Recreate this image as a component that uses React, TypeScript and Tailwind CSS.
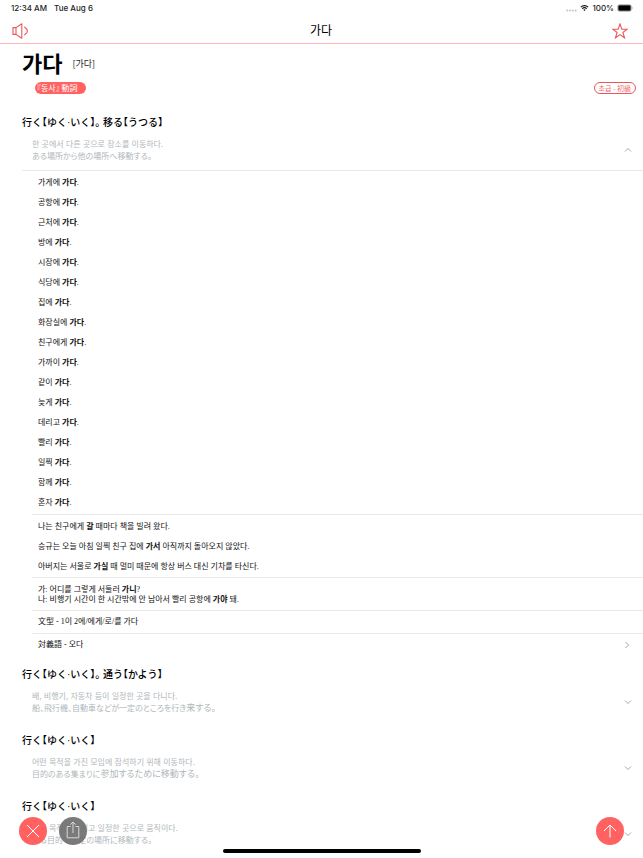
import { useRef, useState } from 'react';
import type { ReactNode } from 'react';

interface Sense {
    title: string;
    korean: string;
    japanese: string;
    japaneseTail?: string;
}

const phrases = [
    '가게에', '공항에', '근처에', '방에', '시장에', '식당에', '집에', '화장실에', '친구에게',
    '가까이', '같이', '늦게', '데리고', '빨리', '일찍', '함께', '혼자',
];

const senses: Sense[] = [
    {
        title: '行く【ゆく·いく】。 移る【うつる】',
        korean: '한 곳에서 다른 곳으로 장소를 이동하다.',
        japanese: 'ある場所から他の場所へ移動する。',
    },
    {
        title: '行く【ゆく·いく】。 通う【かよう】',
        korean: '배, 비행기, 자동차 등이 일정한 곳을 다니다.',
        japanese: '船、飛行機、自動車などが一定のところを行き',
        japaneseTail: '来する。',
    },
    {
        title: '行く【ゆく·いく】',
        korean: '어떤 목적을 가진 모임에 참석하기 위해 이동하다.',
        japanese: '目的のある集まりに',
        japaneseTail: '参加するために移動する。',
    },
    {
        title: '行く【ゆく·いく】',
        korean: '어떤 목적을 가지고 일정한 곳으로 움직이다.',
        japanese: 'ある目的で一定の場所に移動する。',
    },
];

function StatusBar() {
    return (
        <div className="flex h-4 shrink-0 items-center justify-between pl-[11px] pr-[9px] font-['Inter',sans-serif] text-[8px] font-medium leading-4 text-[#222]">
            <div className="flex gap-[7px]">
                <span>12:34 AM</span>
                <span>Tue Aug 6</span>
            </div>
            <div className="flex items-center gap-[3px]">
                <svg viewBox="0 0 11 3" className="mt-1 h-[3px] w-[11px]" fill="#c4c4c4">
                    <circle cx="1.3" cy="1.5" r="1" />
                    <circle cx="4.1" cy="1.5" r="1" />
                    <circle cx="6.9" cy="1.5" r="1" />
                    <circle cx="9.7" cy="1.5" r="1" />
                </svg>
                <svg viewBox="0 0 18 13" className="h-[6px] w-[9px]" fill="none" stroke="#111" strokeWidth="2.4">
                    <path d="M1 4.6a11.6 11.6 0 0 1 16 0" />
                    <path d="M4 8a7.4 7.4 0 0 1 10 0" />
                    <path d="M6.4 10.2a4 4 0 0 1 5.2 0L9 13z" fill="#111" stroke="none" />
                </svg>
                <span>100%</span>
                <svg viewBox="0 0 17 8" className="h-2 w-[17px]">
                    <rect x="0.5" y="0.5" width="14" height="7" rx="2" fill="#fff" stroke="#999" strokeWidth="0.6" />
                    <rect x="1.3" y="1.3" width="12.4" height="5.4" rx="1.2" fill="#000" />
                    <path d="M15.4 2.8v2.4c.9-.3.9-2.1 0-2.4z" fill="#aaa" />
                </svg>
            </div>
        </div>
    );
}

function Chevron({ d, className }: { d: string; className: string }) {
    return (
        <svg viewBox="0 0 8 8" className={className} fill="none" stroke="#a6a6a6" strokeWidth="1" aria-hidden="true">
            <path d={d} />
        </svg>
    );
}

function SenseBlock({ sense, open, onToggle, children }: { sense: Sense; open: boolean; onToggle: () => void; children?: ReactNode }) {
    return (
        <section className="mb-[10px] pl-[22px]">
            <h2 lang="ja" className="pt-px font-['Liberation_Sans','Noto_Sans_CJK_JP',sans-serif] text-[10px] font-medium leading-4 [font-feature-settings:'halt']">
                {sense.title}
            </h2>
            <button
                type="button"
                aria-expanded={open}
                onClick={onToggle}
                className="flex w-full items-center justify-between pb-2 pl-[10px] pr-[11px] pt-[7px] text-left leading-3 text-[#b0b7bb]"
            >
                <span className="block">
                    <span lang="ko" className="block font-['Noto_Sans_CJK_KR',sans-serif] text-[8px]">{sense.korean}</span>
                    <span lang="ja" className="block font-['Noto_Sans_CJK_JP',sans-serif] text-[8px] [font-feature-settings:'palt']">
                        {sense.japanese}
                        {sense.japaneseTail && <span className="text-[9px]">{sense.japaneseTail}</span>}
                    </span>
                </span>
                <Chevron d={open ? 'M1 5.5 4 2.5l3 3' : 'M1 2.5l3 3 3-3'} className="h-2 w-2 shrink-0" />
            </button>
            {open && children}
        </section>
    );
}

function Details() {
    return (
        <div className="border-t border-[#e8e8e8] pl-[10px] font-['Liberation_Serif','Noto_Sans_CJK_KR',serif] text-[8px] leading-5 text-[#111]">
            <ul className="pb-px pl-[6px] pt-[2px]">
                {phrases.map((phrase) => (
                    <li key={phrase}>{phrase} <b>가다</b>.</li>
                ))}
            </ul>
            <ul className="border-t border-[#e8e8e8] pl-[6px] pt-[2px]">
                <li>나는 친구에게 <b>갈</b> 때마다 책을 빌려 왔다.</li>
                <li>승규는 오늘 아침 일찍 친구 집에 <b>가서</b> 아직까지 돌아오지 않았다.</li>
                <li>아버지는 서울로 <b>가실</b> 때 멀미 때문에 항상 버스 대신 기차를 타신다.</li>
            </ul>
            <div className="border-t border-[#e8e8e8] pb-[5px] pl-[6px] pt-[7px] leading-[10px]">
                <p>가: 어디를 그렇게 서둘러 <b>가니</b>?</p>
                <p>나: 비행기 시간이 한 시간밖에 안 남아서 빨리 공항에 <b>가야</b> 돼.</p>
            </div>
            <p className="border-t border-[#e8e8e8] pl-[6px] leading-[22px]">文型 - 1이 2에/에게/로/를 가다</p>
            <a href="#oda" className="flex items-center justify-between border-t border-[#e8e8e8] pl-[6px] pr-3 leading-[22px]">
                対義語 - 오다
                <Chevron d="M2.5 1l3 3-3 3" className="h-2 w-2 shrink-0" />
            </a>
        </div>
    );
}

export default function App() {
    const [opened, setOpened] = useState<number[]>([0]);
    const [starred, setStarred] = useState(false);
    const scroller = useRef<HTMLElement>(null);

    const toggle = (index: number) => {
        setOpened((prev) => (prev.includes(index) ? prev.filter((i) => i !== index) : [...prev, index]));
    };

    return (
        <div className="flex h-screen flex-col overflow-hidden bg-white font-['Noto_Sans_CJK_KR',sans-serif] text-black">
            <StatusBar />

            <header className="flex h-7 shrink-0 items-center justify-between border-b border-b-[#ffb4ba] pl-3 pr-[15px]">
                <button type="button" aria-label="발음 듣기" className="mt-[2px]">
                    <svg viewBox="0 0 18 16" className="h-4 w-[18px]" fill="none" stroke="#e8575a" strokeWidth="1.1" strokeLinejoin="round">
                        <path d="M1 4.6h3v6.8H1zM4 4.6l5.8-3.8v14.4L4 11.4" />
                        <path d="M12.6 4.2c1.6 1 2.8 2.2 2.8 3.8s-1.2 2.8-2.8 3.8" strokeLinecap="round" />
                    </svg>
                </button>
                <span className="text-[12px] leading-5">가다</span>
                <button type="button" aria-label="즐겨찾기" onClick={() => setStarred(!starred)} className="mt-[2px]">
                    <svg viewBox="0 0 16 16" className="h-4 w-4" fill={starred ? '#e8575a' : 'none'} stroke="#e8575a" strokeWidth="1.1">
                        <path d="M8 .9l1.8 5.2 5.5.1-4.4 3.3 1.6 5.3L8 11.6l-4.5 3.2 1.6-5.3L.7 6.2l5.5-.1z" />
                    </svg>
                </button>
            </header>

            <main ref={scroller} className="min-h-0 flex-1 overflow-y-auto [scrollbar-width:none]">
                <div className="mb-5 pl-[22px] pr-[7px]">
                    <div className="flex items-center gap-[10px]">
                        <h1 className="text-[22px] font-bold leading-9">가다</h1>
                        <span className="pt-1 text-[9px] text-[#222]">[가다]</span>
                    </div>
                    <div className="mt-[2px] flex items-center justify-between pl-[13px]">
                        <span className="h-3 rounded-full bg-[#ff6260] pl-[2px] pr-2 text-[8px] leading-3 text-white [font-feature-settings:'halt']">
                            『동사』 動詞
                        </span>
                        <span className="h-3 rounded-full border border-[#e8575a] px-1 text-[7px] leading-[10px] text-[#f0686a]">
                            초급 - 初級
                        </span>
                    </div>
                </div>

                {senses.map((sense, index) => (
                    <SenseBlock key={index} sense={sense} open={opened.includes(index)} onToggle={() => toggle(index)}>
                        {index === 0 && <Details />}
                    </SenseBlock>
                ))}
            </main>

            <div className="fixed bottom-[13px] left-[19px] flex gap-3">
                <button type="button" aria-label="닫기" className="flex size-7 items-center justify-center rounded-full bg-[#ff6260]">
                    <svg viewBox="0 0 14 14" className="size-[14px]" stroke="#fff" strokeWidth="1">
                        <path d="M1 1l12 12M13 1L1 13" />
                    </svg>
                </button>
                <button type="button" aria-label="공유" className="flex size-7 items-center justify-center rounded-full bg-[#6b6b6b]/90">
                    <svg viewBox="0 0 14 18" className="mb-[2px] h-[18px] w-[14px]" fill="none" stroke="#d8d8d8" strokeWidth="1">
                        <path d="M4.5 5.5H1.2v11.3h11.6V5.5H9.5" />
                        <path d="M7 12V1M4.3 3.7L7 1l2.7 2.7" />
                    </svg>
                </button>
            </div>
            <button
                type="button"
                aria-label="맨 위로"
                onClick={() => scroller.current?.scrollTo({ top: 0, behavior: 'smooth' })}
                className="fixed bottom-[13px] right-[19px] flex size-7 items-center justify-center rounded-full bg-[#ff6260]"
            >
                <svg viewBox="0 0 14 14" className="size-[14px]" fill="none" stroke="#fff" strokeWidth="1">
                    <path d="M7 13.5V1M1 7l6-6 6 6" />
                </svg>
            </button>
            <div className="fixed bottom-[5px] left-1/2 h-1 w-[198px] -translate-x-1/2 rounded-full bg-black" />
        </div>
    );
}
